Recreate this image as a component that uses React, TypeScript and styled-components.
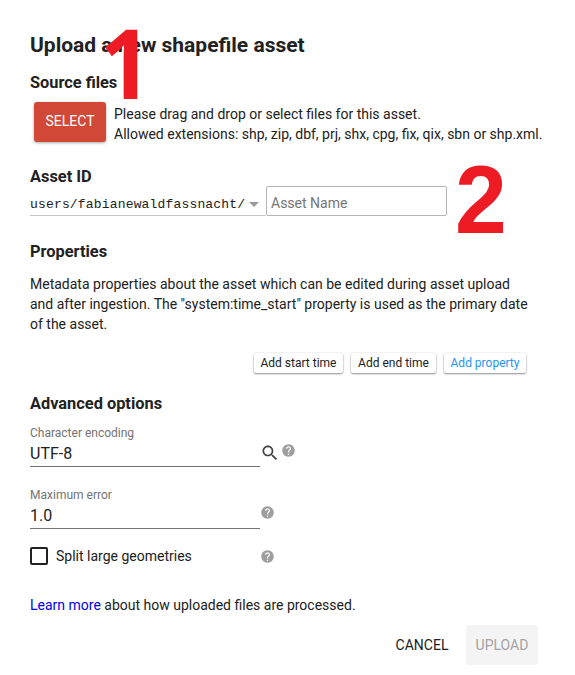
import React from "react";
import styled, { createGlobalStyle } from "styled-components";

const GlobalStyle = createGlobalStyle`
  * { box-sizing: border-box; }
  body {
    margin: 0;
    background: #fff;
    color: #212121;
    font: 400 14px/20px Roboto, sans-serif;
  }
`;

const Dialog = styled.main`
  position: relative;
  width: 575px;
  height: 675px;
  padding: 33px 30px 0;
  overflow: hidden;
`;

const Title = styled.h1`
  margin: 0;
  font-size: 21px;
  line-height: 24px;
  font-weight: 700;
`;

const SectionTitle = styled.h2<{ $gap: number }>`
  margin: ${(p) => p.$gap}px 0 0;
  padding-top: 1px;
  height: 20px;
  font-size: 16.38px;
  line-height: 20px;
  font-weight: 700;
`;

const SourceRow = styled.div`
  display: flex;
  gap: 8px;
  margin: 10px 0 0 4px;
  height: 40px;
`;

const SelectButton = styled.button`
  width: 72px;
  height: 40px;
  padding: 0 0 2px;
  border: 0;
  border-radius: 3px;
  background: #d14836;
  color: #fff;
  font: 400 14px/20px Roboto, sans-serif;
  box-shadow: 0 1px 3px rgba(0, 0, 0, 0.35);
`;

const SourceHint = styled.p`
  margin: 2px 0 0;
  white-space: nowrap;
`;

const AssetRow = styled.div`
  display: flex;
  width: 417px;
  height: 30px;
`;

const PathPicker = styled.div`
  display: flex;
  align-items: center;
  width: 236px;
  height: 30px;
  padding-top: 7px;
  border-bottom: 1px solid #c8c8c8;
  font: 13px/16px "Liberation Mono", "Courier New", monospace;
  white-space: nowrap;
`;

const PathText = styled.span`
  position: relative;
  top: 1px;
  width: 219px;
  letter-spacing: 0.17px;
`;

const Caret = styled.span`
  border: 5px solid transparent;
  border-top-color: #999;
  border-bottom: 0;
`;

const NameInput = styled.input`
  width: 181px;
  height: 30px;
  padding: 4px 4px 0;
  border: 1px solid #b5b5b5;
  border-radius: 2px;
  outline: 0;
  font: 400 14px/20px Roboto, sans-serif;
  &::placeholder {
    color: #757575;
    opacity: 1;
  }
`;

const Paragraph = styled.p`
  width: 505px;
  margin: 13px 0 0;
`;

const PropertyActions = styled.div`
  display: flex;
  justify-content: flex-end;
  gap: 8px;
  width: 496px;
  margin-top: 19px;
`;

const SmallButton = styled.button<{ $width: number; $accent?: boolean }>`
  width: ${(p) => p.$width}px;
  height: 20px;
  padding: 0;
  border: 0;
  border-radius: 2px;
  background: #fff;
  color: ${(p) => (p.$accent ? "#2196f3" : "#212121")};
  font: 400 12px/20px Roboto, sans-serif;
  white-space: nowrap;
  box-shadow: 0 1px 2px rgba(0, 0, 0, 0.42), 0 0 2px rgba(0, 0, 0, 0.12);
`;

const FieldRow = styled.div<{ $gap: number }>`
  display: flex;
  height: 42px;
  margin-top: ${(p) => p.$gap}px;
`;

const Field = styled.label`
  display: flex;
  flex-direction: column;
  width: 230px;
  height: 42px;
  border-bottom: 1px solid #737373;
`;

const FieldLabel = styled.span`
  color: #737373;
  font-size: 12px;
  line-height: 16px;
`;

const FieldValue = styled.span`
  margin-top: 1px;
  font-size: 16px;
  line-height: 24px;
`;

const IconSlot = styled.span<{ $left: number; $top: number }>`
  display: block;
  height: 0;
  margin: ${(p) => p.$top}px 0 0 ${(p) => p.$left}px;
  svg { display: block; }
`;

const CheckRow = styled.div`
  display: flex;
  align-items: center;
  height: 20px;
  margin-top: 17px;
`;

const CheckBox = styled.span`
  width: 18px;
  height: 18px;
  border: 2px solid #212121;
  border-radius: 2px;
`;

const CheckLabel = styled.span`
  width: 212px;
  padding-left: 8px;
`;

const Learn = styled.p`
  margin: 29px 0 0;
`;

const LearnLink = styled.a`
  color: #0000ee;
  text-decoration: none;
`;

const Footer = styled.footer`
  display: flex;
  justify-content: flex-end;
  width: 508px;
  margin-top: 10px;
`;

const FooterButton = styled.button<{ $width: number; $muted?: boolean }>`
  width: ${(p) => p.$width}px;
  height: 40px;
  padding: 0;
  border: 0;
  border-radius: 3px;
  background: ${(p) => (p.$muted ? "#f4f4f4" : "transparent")};
  color: ${(p) => (p.$muted ? "#a3a3a3" : "#212121")};
  font: 400 14px/20px Roboto, sans-serif;
`;

const Marker = styled.span<{ $x: number; $y: number; $plain?: boolean }>`
  position: absolute;
  left: ${(p) => p.$x}px;
  top: ${(p) => p.$y}px;
  color: #ed1c24;
  font: 700 97px/97px ${(p) => (p.$plain ? '"Open Sans"' : '"Liberation Sans"')}, Arial, sans-serif;
  transform: scaleX(${(p) => (p.$plain ? 0.93 : 0.96)});
  transform-origin: left;
`;

const HelpIcon = () => (
  <svg width="15" height="15" viewBox="0 0 24 24" fill="#9e9e9e">
    <path d="M12 2C6.48 2 2 6.48 2 12s4.48 10 10 10 10-4.48 10-10S17.52 2 12 2zm1 17h-2v-2h2v2zm2.07-7.75l-.9.92C13.45 12.9 13 13.5 13 15h-2v-.5c0-1.1.45-2.1 1.17-2.83l1.24-1.26c.37-.36.59-.86.59-1.41 0-1.1-.9-2-2-2s-2 .9-2 2H8c0-2.21 1.79-4 4-4s4 1.79 4 4c0 .88-.36 1.68-.93 2.25z" />
  </svg>
);

const SearchIcon = () => (
  <svg width="20" height="20" viewBox="0 0 24 24" fill="#424242">
    <path d="M15.5 14h-.79l-.28-.27C15.41 12.59 16 11.11 16 9.5 16 5.91 13.09 3 9.5 3S3 5.91 3 9.5 5.91 16 9.5 16c1.61 0 3.09-.59 4.23-1.57l.27.28v.79l5 4.99L20.49 19l-4.99-5zm-6 0C7.01 14 5 11.99 5 9.5S7.01 5 9.5 5 14 7.01 14 9.5 11.99 14 9.5 14z" />
  </svg>
);

export default function App() {
  return (
    <>
      <GlobalStyle />
      <Dialog>
        <Title>Upload a new shapefile asset</Title>
        <SectionTitle $gap={15}>Source files</SectionTitle>
        <SourceRow>
          <SelectButton>SELECT</SelectButton>
          <SourceHint>
            Please drag and drop or select files for this asset.
            <br />
            Allowed extensions: shp, zip, dbf, prj, shx, cpg, fix, qix, sbn or shp.xml.
          </SourceHint>
        </SourceRow>

        <SectionTitle $gap={24}>Asset ID</SectionTitle>
        <AssetRow>
          <PathPicker>
            <PathText>users/fabianewaldfassnacht/</PathText>
            <Caret />
          </PathPicker>
          <NameInput placeholder="Asset Name" />
        </AssetRow>

        <SectionTitle $gap={25}>Properties</SectionTitle>
        <Paragraph>
          Metadata properties about the asset which can be edited during asset upload
          <br />
          and after ingestion. The "system:time_start" property is used as the primary date
          <br />
          of the asset.
        </Paragraph>
        <PropertyActions>
          <SmallButton $width={89}>Add start time</SmallButton>
          <SmallButton $width={85}>Add end time</SmallButton>
          <SmallButton $width={82} $accent>Add property</SmallButton>
        </PropertyActions>

        <SectionTitle $gap={20}>Advanced options</SectionTitle>
        <FieldRow $gap={12}>
          <Field>
            <FieldLabel>Character encoding</FieldLabel>
            <FieldValue>UTF-8</FieldValue>
          </Field>
          <IconSlot $left={0} $top={18}><SearchIcon /></IconSlot>
          <IconSlot $left={1} $top={18}><HelpIcon /></IconSlot>
        </FieldRow>
        <FieldRow $gap={20}>
          <Field>
            <FieldLabel>Maximum error</FieldLabel>
            <FieldValue>1.0</FieldValue>
          </Field>
          <IconSlot $left={0} $top={18}><HelpIcon /></IconSlot>
        </FieldRow>
        <CheckRow>
          <CheckBox />
          <CheckLabel>Split large geometries</CheckLabel>
          <HelpIcon />
        </CheckRow>

        <Learn>
          <LearnLink>Learn more</LearnLink> about how uploaded files are processed.
        </Learn>
        <Footer>
          <FooterButton $width={88}>CANCEL</FooterButton>
          <FooterButton $width={72} $muted>UPLOAD</FooterButton>
        </Footer>

        <Marker $x={99.7} $y={13} $plain>1</Marker>
        <Marker $x={455} $y={151}>2</Marker>
      </Dialog>
    </>
  );
}
